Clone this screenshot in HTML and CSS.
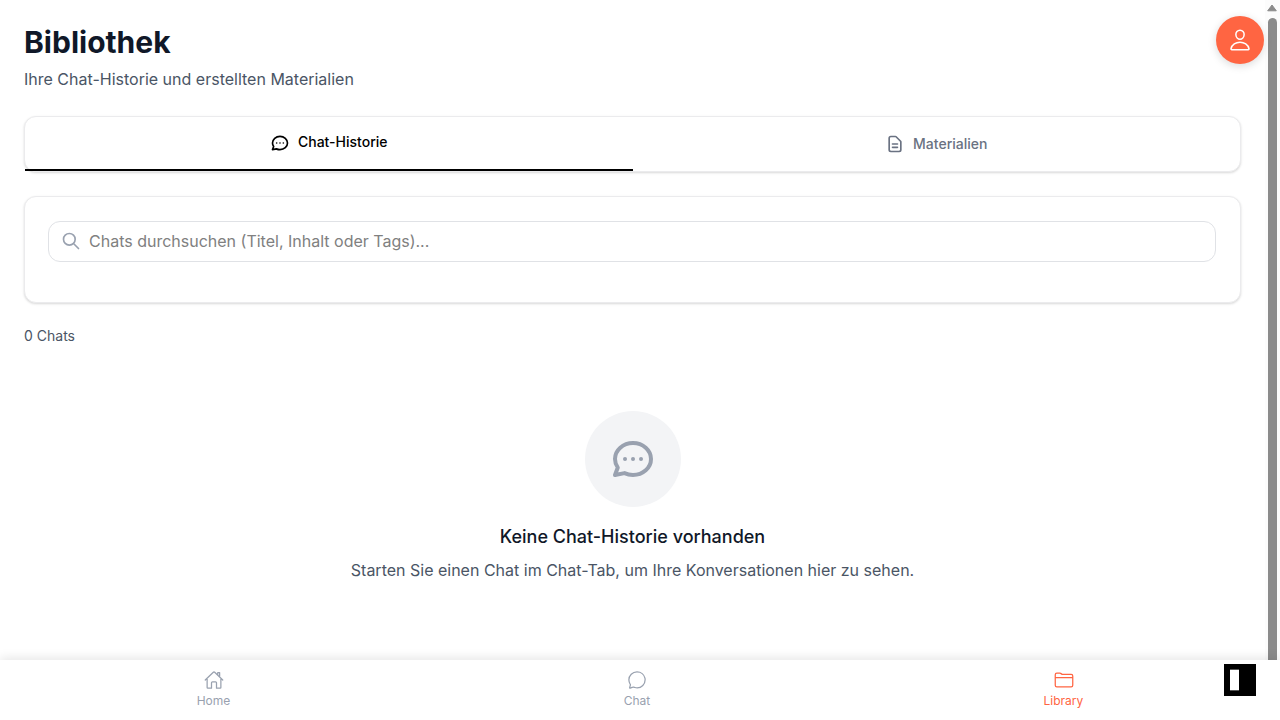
FILE: index.html
```html
<!DOCTYPE html>
<html lang="de">
<head>
<meta charset="utf-8">
<title>Bibliothek</title>
<link rel="stylesheet" href="styles.css">
</head>
<body>
<div class="app">
  <div class="viewport">
    <main class="page">
      <header class="header">
        <h1 class="title">Bibliothek</h1>
        <p class="subtitle">Ihre Chat-Historie und erstellten Materialien</p>
      </header>
      <div class="card tabs">
        <button class="tab active">
          <svg class="icon" viewBox="0 0 24 24"><path d="M8 12h.01M12 12h.01M16 12h.01M21 12c0 4.418-4.03 8-9 8a9.863 9.863 0 01-4.255-.949L3 20l1.395-3.72C3.512 15.042 3 13.574 3 12c0-4.418 4.03-8 9-8s9 3.582 9 8z"/></svg>
          <span>Chat-Historie</span>
        </button>
        <button class="tab">
          <svg class="icon" viewBox="0 0 24 24"><path d="M9 12h6m-6 4h6m2 5H7a2 2 0 01-2-2V5a2 2 0 012-2h5.586a1 1 0 01.707.293l5.414 5.414a1 1 0 01.293.707V19a2 2 0 01-2 2z"/></svg>
          <span>Materialien</span>
        </button>
      </div>
      <section class="card filters">
        <div class="search">
          <svg class="icon" viewBox="0 0 24 24"><path d="M21 21l-6-6m2-5a7 7 0 11-14 0 7 7 0 0114 0z"/></svg>
          <span>Chats durchsuchen (Titel, Inhalt oder Tags)...</span>
        </div>
      </section>
      <p class="count">0 Chats</p>
      <section class="empty">
        <div class="empty-icon">
          <svg class="icon large" viewBox="0 0 24 24"><path d="M8 12h.01M12 12h.01M16 12h.01M21 12c0 4.418-4.03 8-9 8a9.863 9.863 0 01-4.255-.949L3 20l1.395-3.72C3.512 15.042 3 13.574 3 12c0-4.418 4.03-8 9-8s9 3.582 9 8z"/></svg>
        </div>
        <h2 class="empty-title">Keine Chat-Historie vorhanden</h2>
        <p class="empty-text">Starten Sie einen Chat im Chat-Tab, um Ihre Konversationen hier zu sehen.</p>
      </section>
    </main>
    <div class="scrollbar">
      <svg class="scroll-arrow" viewBox="0 0 10 8"><path d="M5 1 9.3 6.8H.7z"/></svg>
      <div class="thumb"></div>
    </div>
  </div>
  <nav class="nav">
    <a class="nav-item">
      <svg class="ion" viewBox="0 0 512 512"><path d="M80 212v236a16 16 0 0016 16h96V328a24 24 0 0124-24h80a24 24 0 0124 24v136h96a16 16 0 0016-16V212M480 256L266.89 52c-5-5.28-16.69-5.34-21.78 0L32 256M400 179V64h-48v69"/></svg>
      <span>Home</span>
    </a>
    <a class="nav-item">
      <svg class="ion" viewBox="0 0 512 512"><path d="M87.49 380c1.19-4.38-1.44-10.47-3.95-14.86a44.86 44.86 0 00-2.54-3.8 199.81 199.81 0 01-33-110C47.65 139.09 140.73 48 255.83 48 356.21 48 440 117.54 459.58 209.85a199 199 0 014.42 41.64c0 112.41-89.49 204.93-204.59 204.93-18.3 0-43-4.6-56.47-8.37s-26.92-8.77-30.39-10.11a31.09 31.09 0 00-11.12-2.07 30.71 30.71 0 00-12.09 2.43l-67.83 24.48a16 16 0 01-4.67 1.22 9.6 9.6 0 01-9.57-9.74 15.85 15.85 0 01.6-3.29z"/></svg>
      <span>Chat</span>
    </a>
    <a class="nav-item current">
      <svg class="ion" viewBox="0 0 512 512"><path d="M440 432H72a40 40 0 01-40-40V120a40 40 0 0140-40h75.89a40 40 0 0122.19 6.72l27.84 18.56a40 40 0 0022.19 6.72H440a40 40 0 0140 40v240a40 40 0 01-40 40zM32 192h448"/></svg>
      <span>Library</span>
    </a>
  </nav>
  <button class="avatar" aria-label="Profil">
    <svg class="ion avatar-icon" viewBox="0 0 512 512"><path d="M344 144c-3.92 52.87-44 96-88 96s-84.15-43.12-88-96c-4-55 35-96 88-96s92 42 88 96zM256 304c-87 0-175.3 48-191.64 138.6C62.39 453.52 68.57 464 80 464h352c11.44 0 17.62-10.48 15.65-21.4C431.3 352 343 304 256 304z"/></svg>
  </button>
  <div class="badge"><div class="badge-bar"></div></div>
</div>
</body>
</html>
```
FILE: styles.css
```css
* { box-sizing: border-box; }
body, h1, h2, p { margin: 0; }
body { font-family: Inter, "Liberation Sans", sans-serif; background: #fff; color: #101828; }
button { font: inherit; border: 0; padding: 0; background: none; }
.app { position: relative; height: 720px; overflow: hidden; display: flex; flex-direction: column; }
.viewport { height: 660px; display: flex; flex: none; }
.page { flex: 1; padding: 24px; }
.title { font-size: 30px; line-height: 36px; font-weight: 700; }
.subtitle { margin-top: 7px; font-size: 16px; line-height: 24px; color: #4a5565; }
.header { margin-bottom: 25px; }
.card { background: #fff; border: 1px solid #ebebed; border-radius: 12px; box-shadow: 0 1px 3px rgba(0,0,0,.1), 0 1px 2px rgba(0,0,0,.06); }
.tabs { display: flex; height: 56px; margin-bottom: 24px; }
.tab { flex: 1; display: flex; align-items: center; justify-content: center; gap: 8px; font-size: 14px; line-height: 20px; font-weight: 500; color: #6a7282; }
.tab.active { color: #000; border-bottom: 2px solid #000; padding-bottom: 1px; }
.tab.active span { margin-bottom: 1px; }
.icon { width: 20px; height: 20px; fill: none; stroke: currentColor; stroke-width: 2; stroke-linecap: round; stroke-linejoin: round; flex: none; }
.icon.large { width: 48px; height: 48px; }
.filters { height: 107px; padding: 23.5px 24px 0 23px; }
.search { height: 41.5px; display: flex; align-items: center; gap: 8px; padding: 0 12px 1px; border: 1px solid #e0e2e6; border-radius: 12px; color: #808080; font-size: 16px; line-height: 20px; }
.search .icon { color: #99a1af; }
.count { margin-top: 23px; font-size: 14px; line-height: 20px; color: #4a5565; }
.empty { display: flex; flex-direction: column; align-items: center; padding-top: 64.5px; }
.empty-icon { width: 96px; height: 96px; border-radius: 50%; background: #f3f4f6; color: #99a1af; display: flex; align-items: center; justify-content: center; }
.empty-title { margin-top: 16.5px; font-size: 18px; line-height: 28px; font-weight: 500; }
.empty-text { margin-top: 7px; font-size: 16px; line-height: 24px; color: #4a5565; }
.scrollbar { width: 15px; background: #fcfcfc; display: flex; flex-direction: column; padding: 4px 3px 0 2px; gap: 6px; }
.scroll-arrow { width: 10px; height: 8px; flex: none; fill: #8b8b8b; stroke: #8b8b8b; stroke-linejoin: round; }
.thumb { width: 9px; margin-left: 1px; flex: 1; background: #8b8b8b; border-radius: 5px 5px 0 0; }
.nav { position: relative; height: 60px; background: #fff; box-shadow: 0 -2px 10px rgba(0,0,0,.1); display: flex; justify-content: space-around; }
.nav-item { display: flex; flex-direction: column; align-items: center; padding-top: 10px; gap: 3px; color: #99a1af; font-size: 12px; line-height: 15px; }
.nav-item:first-child .ion { margin-left: 1px; }
.nav-item.current { color: #ff6542; }
.nav-item.current .ion { margin-left: 1px; }
.ion { width: 20px; height: 20px; fill: none; stroke: currentColor; stroke-width: 32; stroke-linecap: round; stroke-linejoin: round; }
.avatar { position: absolute; top: 16px; right: 16px; width: 48px; height: 48px; border-radius: 50%; background: #ff6542; color: #fff; display: flex; align-items: center; justify-content: center; box-shadow: 0 2px 8px rgba(0,0,0,.15); }
.avatar-icon { width: 24px; height: 24px; }
.badge { position: absolute; top: 664px; left: 1224px; width: 32px; height: 32px; background: #000; padding: 5px 6px; }
.badge-bar { width: 9px; height: 22px; background: #fff; border-top: 1px solid #555; border-bottom: 1px solid #555; }
```
